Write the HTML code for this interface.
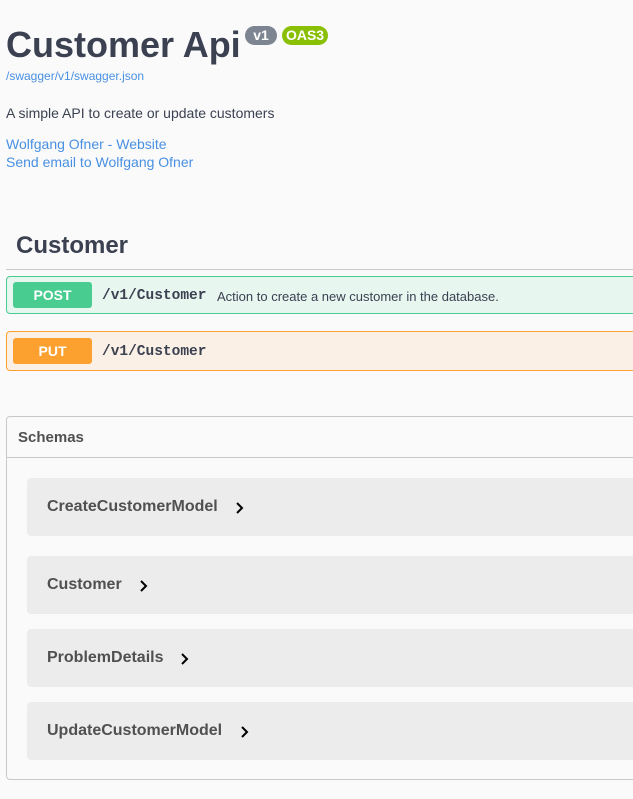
<!DOCTYPE html>
<html><head><meta charset="utf-8"><style>
body{margin:0;background:#fafafa;font-family:"Liberation Sans",sans-serif;color:#3b4151;width:633px;height:799px;overflow:hidden;position:relative}
.abs{position:absolute}
h1{position:absolute;left:6px;top:24px;margin:0;font-size:36px;font-weight:bold;color:#3b4151;line-height:42px}
.badge{position:absolute;top:26px;height:19px;border-radius:10px;color:#fff;font-weight:bold;font-size:14px;line-height:19px;text-align:center}
a{color:#4990e2;text-decoration:none}
.op{position:absolute;left:6px;width:640px;height:38px;border-radius:4px;box-sizing:border-box}
.m{position:absolute;left:6px;top:5px;width:79px;height:26px;border-radius:3px;color:#fff;font-weight:bold;font-size:14px;line-height:26px;text-align:center}
.path{position:absolute;left:95px;top:10px;font-family:"Liberation Mono",monospace;font-weight:bold;font-size:14.5px;color:#3b4151}
.model{position:absolute;left:27px;width:620px;height:58px;background:#ececec;border-radius:4px}
.model span{position:absolute;left:20px;top:20px;font-size:16px;font-weight:bold;color:#505050}
.model svg{position:absolute;top:24px}
</style></head><body>
<h1>Customer Api</h1>
<div class="badge" style="left:245px;width:32px;background:#7d8492">v1</div>
<div class="badge" style="left:282px;width:46px;background:#89bf04">OAS3</div>
<a class="abs" style="left:6px;top:69px;font-size:12px">/swagger/v1/swagger.json</a>
<div class="abs" style="left:6px;top:105px;font-size:14px">A simple API to create or update customers</div>
<a class="abs" style="left:6px;top:136px;font-size:14px">Wolfgang Ofner - Website</a>
<a class="abs" style="left:6px;top:154px;font-size:14px">Send email to Wolfgang Ofner</a>
<div class="abs" style="left:16px;top:232px;font-size:24px;font-weight:bold">Customer</div>
<div class="abs" style="left:6px;top:269px;width:640px;height:1px;background:#c8c9cc"></div>
<div class="op" style="top:276px;background:#e8f6f0;border:1px solid #49cc90">
<div class="m" style="background:#49cc90">POST</div>
<div class="path" style="top:11px">/v1/Customer</div>
<div class="abs" style="left:210px;top:12px;font-size:13px">Action to create a new customer in the database.</div>
</div>
<div class="op" style="top:331px;height:40px;background:#fbf0e6;border:1px solid #fca130">
<div class="m" style="background:#fca130;top:6px">PUT</div>
<div class="path" style="top:12px">/v1/Customer</div>
</div>
<div class="abs" style="left:6px;top:416px;width:640px;height:364px;border:1px solid #c8c9cc;border-radius:4px;box-sizing:border-box">
<div class="abs" style="left:11px;top:12px;font-size:15px;font-weight:bold;color:#505050">Schemas</div>
<div class="abs" style="left:0;top:40px;width:640px;height:1px;background:#c8c9cc"></div>
</div>
<div class="model" style="top:478px"><span>CreateCustomerModel</span><svg width="10" height="12" style="left:208px" viewBox="0 0 10 12"><path d="M2 1l5 5-5 5" fill="none" stroke="#000" stroke-width="2"/></svg></div>
<div class="model" style="top:556px"><span>Customer</span><svg width="10" height="12" style="left:112px" viewBox="0 0 10 12"><path d="M2 1l5 5-5 5" fill="none" stroke="#000" stroke-width="2"/></svg></div>
<div class="model" style="top:629px"><span>ProblemDetails</span><svg width="10" height="12" style="left:153px" viewBox="0 0 10 12"><path d="M2 1l5 5-5 5" fill="none" stroke="#000" stroke-width="2"/></svg></div>
<div class="model" style="top:702px"><span>UpdateCustomerModel</span><svg width="10" height="12" style="left:213px" viewBox="0 0 10 12"><path d="M2 1l5 5-5 5" fill="none" stroke="#000" stroke-width="2"/></svg></div>
</body></html>
